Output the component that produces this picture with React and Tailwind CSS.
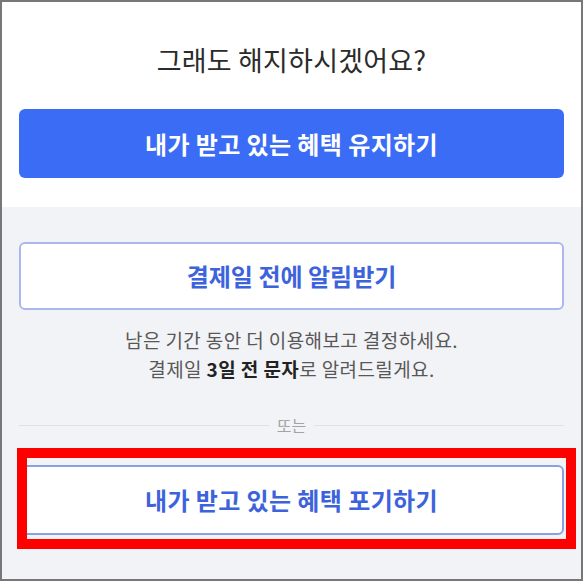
export default function App() {
  return (
    <div className="w-[585px] h-[582px] bg-white" style={{ fontFamily: '"Noto Sans CJK KR", "Noto Sans", sans-serif' }}>
      <div className="w-[583px] h-[581px] border-2 border-[#777] flex flex-col overflow-hidden">
        {/* top: question + keep button */}
        <div className="bg-white px-[17px] pt-[41px] pb-[29px]">
          <h2 className="text-center text-[27px] leading-[34px] text-[#2b2b2b] font-normal tracking-[0.2px]">
            그래도 해지하시겠어요?
          </h2>
          <button className="mt-[32px] w-full h-[69px] rounded-[6px] bg-[#3b6cf6] text-white text-[24px] font-bold tracking-[0.4px]">
            내가 받고 있는 혜택 유지하기
          </button>
        </div>

        {/* gray section */}
        <div className="flex-1 bg-[#f2f3f6] px-[17px] pt-[35px]">
          <button className="w-full h-[68px] rounded-[6px] bg-white border-2 border-[#abb7ee] text-[#3d63dc] text-[24px] font-bold">
            결제일 전에 알림받기
          </button>
          <div className="mt-[15px] text-center text-[19px] leading-[29px] text-[#585858] tracking-[0.4px]">
            <p>남은 기간 동안 더 이용해보고 결정하세요.</p>
            <p>
              결제일 <b className="text-[#222]">3일 전 문자</b>로 알려드릴게요.
            </p>
          </div>

          <div className="mt-[32px] flex items-center gap-[8px] h-[20px]">
            <div className="flex-1 h-px bg-[#dfe1e6]" />
            <span className="text-[16px] text-[#a3a3a3]">또는</span>
            <div className="flex-1 h-px bg-[#dfe1e6]" />
          </div>

          <div className="relative mt-[30px]">
            <button className="w-full h-[70px] rounded-[6px] bg-white border-2 border-[#8c9fe3] text-[#3d63dc] text-[24px] font-bold tracking-[0.4px]">
              내가 받고 있는 혜택 포기하기
            </button>
            <div className="absolute left-[-2px] top-[-17px] w-[559px] h-[101px] border-[10px] border-[#ff0000] pointer-events-none" />
          </div>
        </div>
      </div>
    </div>
  );
}
